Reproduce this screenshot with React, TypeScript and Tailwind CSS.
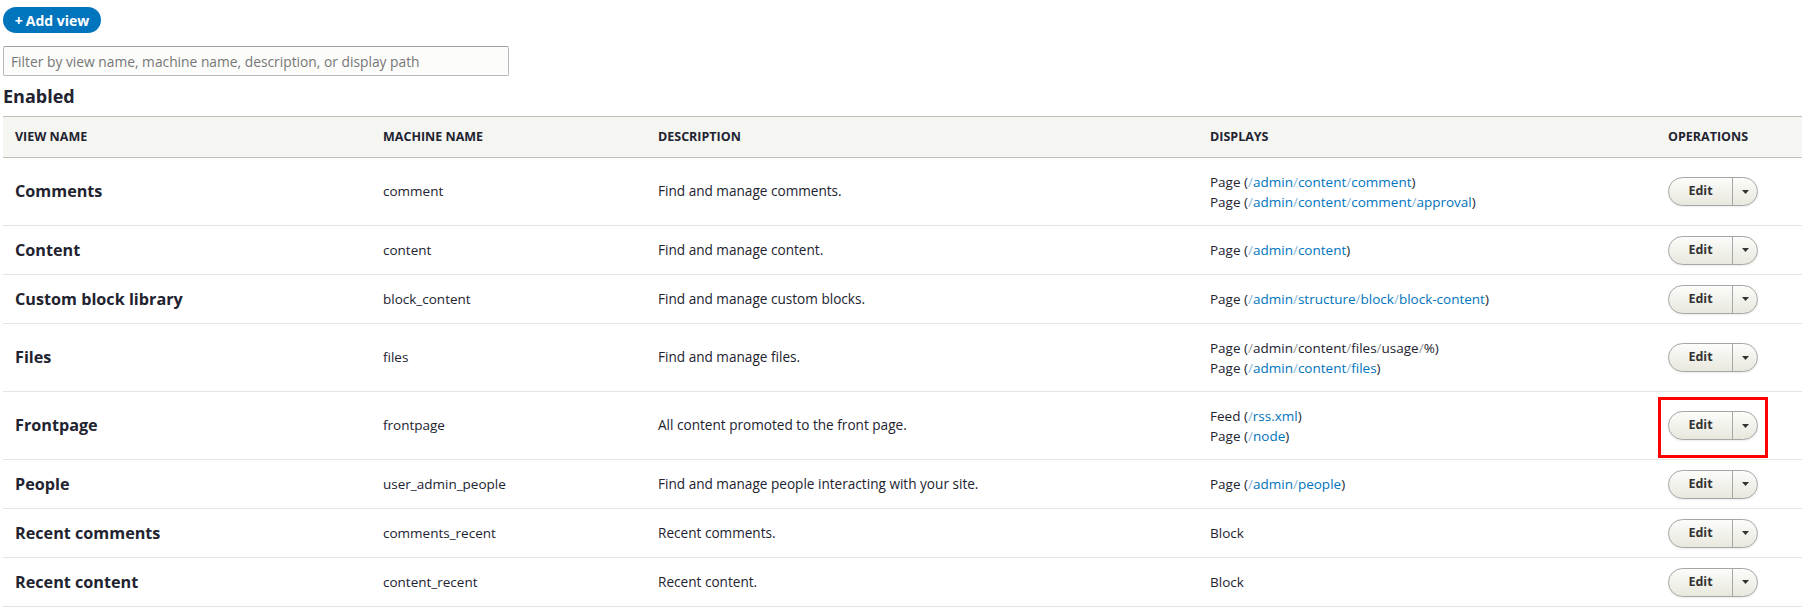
import React from "react";

type Display = { type: string; path?: string; link?: boolean };

type ViewRow = {
  name: string;
  machine: string;
  description: string;
  displays: Display[];
  highlight?: boolean;
};

const ROWS: ViewRow[] = [
  {
    name: "Comments",
    machine: "comment",
    description: "Find and manage comments.",
    displays: [
      { type: "Page", path: "/admin/content/comment", link: true },
      { type: "Page", path: "/admin/content/comment/approval", link: true },
    ],
  },
  {
    name: "Content",
    machine: "content",
    description: "Find and manage content.",
    displays: [{ type: "Page", path: "/admin/content", link: true }],
  },
  {
    name: "Custom block library",
    machine: "block_content",
    description: "Find and manage custom blocks.",
    displays: [{ type: "Page", path: "/admin/structure/block/block-content", link: true }],
  },
  {
    name: "Files",
    machine: "files",
    description: "Find and manage files.",
    displays: [
      { type: "Page", path: "/admin/content/files/usage/%", link: false },
      { type: "Page", path: "/admin/content/files", link: true },
    ],
  },
  {
    name: "Frontpage",
    machine: "frontpage",
    description: "All content promoted to the front page.",
    displays: [
      { type: "Feed", path: "/rss.xml", link: true },
      { type: "Page", path: "/node", link: true },
    ],
    highlight: true,
  },
  {
    name: "People",
    machine: "user_admin_people",
    description: "Find and manage people interacting with your site.",
    displays: [{ type: "Page", path: "/admin/people", link: true }],
  },
  {
    name: "Recent comments",
    machine: "comments_recent",
    description: "Recent comments.",
    displays: [{ type: "Block" }],
  },
  {
    name: "Recent content",
    machine: "content_recent",
    description: "Recent content.",
    displays: [{ type: "Block" }],
  },
];

const GRID = "grid grid-cols-[368px_275px_552px_458px_1fr] items-center";

function DisplayPath({ path, link }: { path: string; link?: boolean }) {
  const parts = path.split("/");
  return (
    <span className={link ? "text-[#0074bd]" : "text-[#222330]"}>
      {parts.map((p, i) => (
        <React.Fragment key={i}>
          {i > 0 && <span className={link ? "text-[#8ab6d9]" : "text-[#9a9a9a]"}>/</span>}
          {p}
        </React.Fragment>
      ))}
    </span>
  );
}

function EditButton({ highlight }: { highlight?: boolean }) {
  return (
    <div className="relative inline-flex">
      <div className="flex h-[29px] w-[90px] rounded-full border border-[#a6a6a6] bg-gradient-to-b from-[#fcfcfa] to-[#e8e8de] shadow-[0_1px_2px_rgba(0,0,0,0.08)]">
        <span className="flex w-[63px] items-center justify-center text-[12.5px] font-bold text-[#333]">Edit</span>
        <span className="flex flex-1 items-center justify-center border-l border-[#a6a6a6]">
          <svg width="7" height="4" viewBox="0 0 7 4">
            <path d="M0 0h7L3.5 4z" fill="#333" />
          </svg>
        </span>
      </div>
      {highlight && (
        <span className="absolute -left-[10px] -top-[14px] h-[61px] w-[110px] border-[3px] border-[#ff0000]" />
      )}
    </div>
  );
}

export default function App() {
  return (
    <div className="min-h-screen bg-white pl-[3px] text-[#222330] [font-family:'Open_Sans',sans-serif]">
      <div className="pt-[7px]">
        <button className="flex h-[26px] w-[98px] items-center justify-center rounded-full bg-[#0074bd] text-[14px] font-bold text-white">
          <span className="mr-[3px]">+</span>Add view
        </button>
      </div>

      <div className="mt-[13px]">
        <input
          type="text"
          placeholder="Filter by view name, machine name, description, or display path"
          className="h-[30px] w-[506px] rounded-[2px] border border-[#b8b8b8] border-t-[#a0a0a0] bg-[#fcfcfa] px-[7px] text-[13.8px] placeholder:text-[#777] focus:outline-none"
        />
      </div>

      <h2 className="mt-[6px] h-[34px] text-[18px] font-bold leading-[28px] text-[#222330]">Enabled</h2>

      <div>
        <div className={`${GRID} h-[42px] border-y border-[#bfbfba] bg-[#f5f5f2] text-[12.5px] font-bold uppercase text-[#222330]`}>
          <div className="px-[12px]">View name</div>
          <div className="px-[12px]">Machine name</div>
          <div className="px-[12px]">Description</div>
          <div className="px-[12px]">Displays</div>
          <div className="px-[12px]">Operations</div>
        </div>

        {ROWS.map((row) => {
          const tall = row.displays.length > 1;
          return (
            <div
              key={row.machine}
              className={`${GRID} ${tall ? "h-[68px]" : "h-[49px]"} border-b border-[#e6e4df] text-[13.5px]`}
            >
              <div className="px-[12px] text-[16.2px] font-bold">{row.name}</div>
              <div className="px-[12px]">{row.machine}</div>
              <div className="px-[12px] text-[13.6px]">{row.description}</div>
              <div className="px-[12px] leading-[20px]">
                {row.displays.map((d, i) => (
                  <div key={i}>
                    {d.type}
                    {d.path && (
                      <>
                        {" ("}
                        <DisplayPath path={d.path} link={d.link} />
                        {")"}
                      </>
                    )}
                  </div>
                ))}
              </div>
              <div className="px-[12px]">
                <EditButton highlight={row.highlight} />
              </div>
            </div>
          );
        })}
      </div>
    </div>
  );
}
